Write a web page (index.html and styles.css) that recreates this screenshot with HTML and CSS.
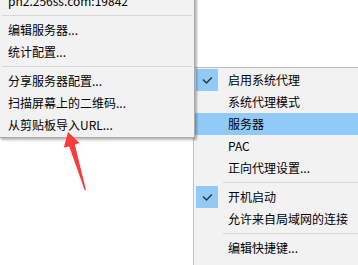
FILE: index.html
```html
<!DOCTYPE html>
<html lang="zh-CN">
<head>
  <meta charset="UTF-8">
  <meta name="viewport" content="width=device-width, initial-scale=1.0">
  <title>系统托盘菜单</title>
  <link rel="stylesheet" href="styles.css">
</head>
<body>
  <div class="desktop">
    <!-- main tray menu -->
    <div class="menu main-menu">
      <div class="item checked"><span class="check"><svg width="22" height="22" viewBox="0 0 22 22"><polyline points="7,10.5 10.5,14 15.8,8.4" /></svg></span><span class="label">启用系统代理</span></div>
      <div class="item"><span class="check"></span><span class="label">系统代理模式</span></div>
      <div class="item active"><span class="check"></span><span class="label">服务器</span></div>
      <div class="item"><span class="check"></span><span class="label">PAC</span></div>
      <div class="item"><span class="check"></span><span class="label">正向代理设置...</span></div>
      <div class="separator"></div>
      <div class="item checked"><span class="check"><svg width="22" height="22" viewBox="0 0 22 22"><polyline points="7,10.5 10.5,14 15.8,8.4" /></svg></span><span class="label">开机启动</span></div>
      <div class="item"><span class="check"></span><span class="label">允许来自局域网的连接</span></div>
      <div class="separator"></div>
      <div class="item"><span class="check"></span><span class="label">编辑快捷键...</span></div>
    </div>

    <!-- server submenu -->
    <div class="menu sub-menu">
      <div class="item"><span class="label">pn2.256ss.com:19842</span></div>
      <div class="separator"></div>
      <div class="item"><span class="label">编辑服务器...</span></div>
      <div class="item"><span class="label">统计配置...</span></div>
      <div class="separator"></div>
      <div class="item"><span class="label">分享服务器配置...</span></div>
      <div class="item"><span class="label">扫描屏幕上的二维码...</span></div>
      <div class="item"><span class="label">从剪贴板导入URL...</span></div>
    </div>

    <svg class="arrow" width="100" height="200" viewBox="0 0 100 200">
      <polygon points="68,132 79.5,143 74.8,144.6 86,190 84.6,190 69.2,146.6 63.8,147.6" />
    </svg>
  </div>
</body>
</html>
```

FILE: styles.css
```css
body {
  margin: 0;
  background: #ffffff;
  font-family: "Noto Sans CJK SC", "Noto Sans", sans-serif;
  font-size: 12px;
  color: #000000;
}

.desktop {
  position: relative;
  width: 358px;
  height: 265px;
  overflow: hidden;
}

.menu {
  position: absolute;
  display: flex;
  flex-direction: column;
  background: #f2f2f2;
  box-sizing: border-box;
}

.main-menu {
  left: 193px;
  top: 67px;
  width: 200px;
  padding: 1px 0 20px;
  border-top: 1px solid #bdbdbd;
  border-left: 1px solid #c4c4c4;
}

.sub-menu {
  left: -1px;
  top: -12px;
  width: 196px;
  padding: 1px 0;
  border: 1px solid #a9a9a9;
  box-shadow: 2px 2px 2px rgba(0, 0, 0, 0.28);
}

.item {
  display: flex;
  align-items: center;
  height: 22px;
  line-height: 22px;
  white-space: nowrap;
}

.sub-menu .item {
  padding-left: 8px;
}

.item.active {
  background: #91c9f7;
}

.check {
  width: 22px;
  height: 22px;
  margin-left: 2px;
  flex-shrink: 0;
}

.check svg {
  display: block;
}

.check polyline {
  fill: none;
  stroke: #333333;
  stroke-width: 1.5;
}

.item.checked .check {
  background: #91c9f7;
}

.main-menu .label {
  margin-left: 10px;
}

.separator {
  height: 1px;
  margin: 3px 0 3px 2px;
  background: #d7d7d7;
}

.main-menu .separator {
  margin-left: 29px;
}

.sub-menu .separator {
  margin-right: 2px;
}

.arrow {
  position: absolute;
  left: 0;
  top: 0;
}

.arrow polygon {
  fill: #f93b3b;
}
```
